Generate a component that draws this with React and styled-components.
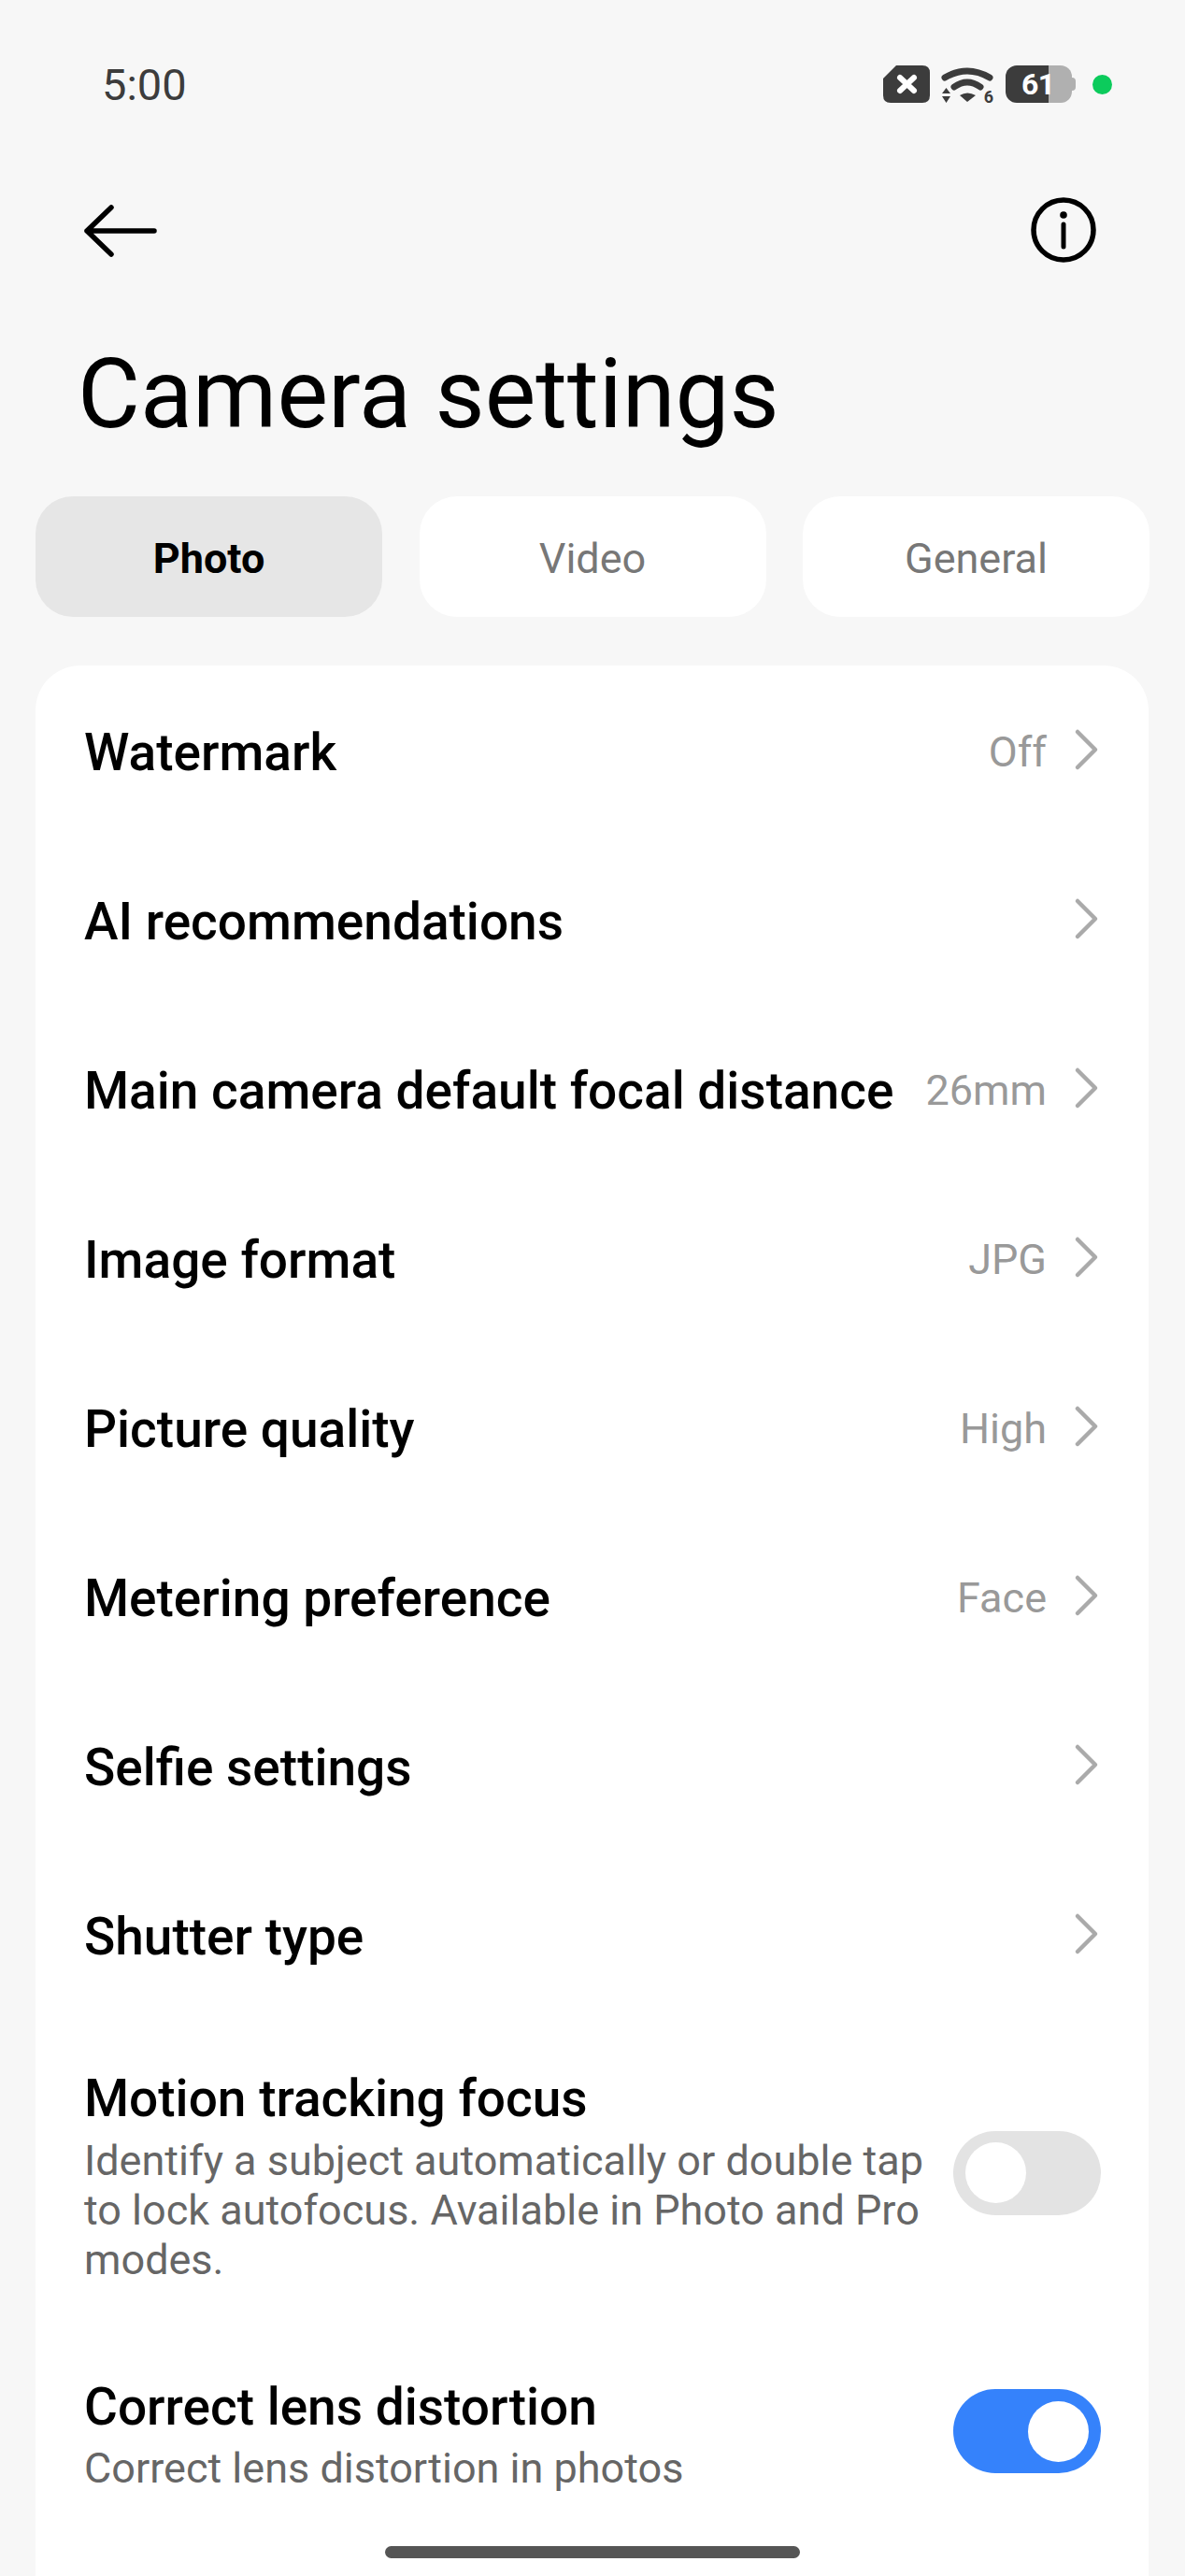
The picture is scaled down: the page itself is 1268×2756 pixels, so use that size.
import React from 'react';
import styled, { createGlobalStyle } from 'styled-components';

const Global = createGlobalStyle`
  html, body { margin: 0; padding: 0; background: #f7f7f7; }
  body { font-family: Roboto, "Noto Sans", sans-serif; }
`;

const Page = styled.div`
  width: 1268px; height: 2756px; overflow: hidden; position: relative; background: #f7f7f7; color: #000;
  display: flex; flex-direction: column;
`;
const StatusBar = styled.div`
  height: 56px; margin-top: 62px; padding: 0 78px 0 110px; display: flex; justify-content: space-between; align-items: center;
`;
const Time = styled.div`font-size: 47px; line-height: 56px; color: #3c3c3c; margin: 2px 0 0 -1px;`;
const StatusIcons = styled.div`display: flex; align-items: center;`;
const SimIcon = styled.svg`width: 50px; height: 40px; display: block;`;
const Wifi = styled.div`position: relative; width: 56px; height: 40px; margin-left: 12px;`;
const WifiIcon = styled.svg`width: 56px; height: 40px; display: block;`;
const WifiBadge = styled.span`
  position: absolute; right: 0; bottom: -1px; font-size: 18px; line-height: 14px; font-weight: 700; color: #3c3c3c;
`;
const Battery = styled.div`
  position: relative; width: 75px; height: 40px; margin-left: 13px;
  display: flex;
`;
const BatteryFill = styled.div`width: 46px; background: #3c3c3c; border-radius: 12px 0 0 12px;`;
const BatteryRest = styled.div`width: 25px; background: #b0b0b0; border-radius: 0 12px 12px 0;`;
const BatteryNub = styled.div`width: 4px; height: 14px; margin-top: 13px; background: #b0b0b0; border-radius: 0 4px 4px 0;`;
const BatteryText = styled.div`
  position: absolute; left: 17px; top: 0; line-height: 40px; font-size: 32px; font-weight: 700; color: #fff; letter-spacing: -0.5px;
`;
const Dot = styled.div`width: 21px; height: 21px; border-radius: 50%; background: #0ccb5c; margin-left: 18px;`;
const Nav = styled.div`
  display: flex; justify-content: space-between; align-items: center; padding: 0 94px 0 90px; margin-top: 91px; height: 72px;
`;
const BackIcon = styled.svg`width: 80px; height: 60px; display: block;`;
const InfoIcon = styled.svg`width: 72px; height: 72px; display: block; margin-top: 1px;`;
const Title = styled.h1`
  margin: 79px 0 0 83px; font-size: 103px; line-height: 124px; font-weight: 400;
`;
const Tabs = styled.div`display: grid; grid-template-columns: repeat(3, 371px); gap: 39.5px; padding: 0 38px; margin-top: 47px;`;
const Tab = styled.div`
  height: 129px; box-sizing: border-box; padding-top: 3px; border-radius: 40px; display: flex; align-items: center; justify-content: center; font-size: 45px;
  background: ${p => p.$active ? '#e6e6e6' : '#fff'}; color: ${p => p.$active ? '#000' : '#777'}; font-weight: ${p => p.$active ? 700 : 400};
`;
const Card = styled.div`
  margin: 52px 39px 0 38px; flex: 1; background: #fff; border-radius: 48px 48px 0 0; padding: 0 51px 0 52px;
`;
const Row = styled.div`display: flex; align-items: center; height: 181px;`;
const Label = styled.div`flex: 1; font-size: 55px; line-height: 64px; color: #000; font-weight: 500; white-space: nowrap;`;
const RowLabel = styled(Label)`padding-top: 4px;`;
const Value = styled.div`color: #999; font-size: 45px; margin-right: 28px; padding-top: 3px;`;
const ChevronIcon = styled.svg`width: 30px; height: 50px; display: block; margin: -2px 0 0 0;`;
const ToggleRow = styled.div`
  display: flex; align-items: center; padding: ${p => p.$first ? '53px 0 49px' : '50px 0 49px'};
`;
const Col = styled.div`flex: 1; padding-right: 24px;`;
const Sub = styled.div`font-size: 45px; line-height: 53px; color: #666; margin-top: 7.5px;`;
const Toggle = styled.div`
  width: 158px; height: 90px; border-radius: 45px; background: ${p => p.$on ? '#3582fb' : '#e3e3e3'}; display: flex; align-items: center; padding: 0 13px; box-sizing: border-box;
  justify-content: ${p => p.$on ? 'flex-end' : 'flex-start'}; flex-shrink: 0; margin-top: -7px;
`;
const Knob = styled.div`width: 65px; height: 65px; border-radius: 50%; background: #fff;`;
const Home = styled.div`position: absolute; left: 412px; bottom: 19px; width: 444px; height: 13px; border-radius: 7px; background: #555;`;

const Chevron = () => (
  <ChevronIcon viewBox="0 0 30 50"><path d="M5 6 L24 25 L5 44" fill="none" stroke="#aaa" strokeWidth="4.5" strokeLinecap="round" strokeLinejoin="round"/></ChevronIcon>
);

const items = [['Watermark','Off'],['AI recommendations'],['Main camera default focal distance','26mm'],['Image format','JPG'],['Picture quality','High'],['Metering preference','Face'],['Selfie settings'],['Shutter type']];

export default function App() {
  return <Page><Global/>
    <StatusBar>
      <Time>5:00</Time>
      <StatusIcons>
        <SimIcon viewBox="0 0 50 40">
          <path d="M14 0 H42 Q50 0 50 8 V32 Q50 40 42 40 H8 Q0 40 0 32 V14 Z" fill="#3c3c3c"/>
          <path d="M18 13 L33 27 M33 13 L18 27" stroke="#fff" strokeWidth="6" strokeLinecap="round"/>
        </SimIcon>
        <Wifi>
          <WifiIcon viewBox="0 0 56 40">
            <path d="M4 13 Q28 -1 52 13" fill="none" stroke="#3c3c3c" strokeWidth="7" strokeLinecap="round"/>
            <path d="M14 23 Q28 13 42 23" fill="none" stroke="#3c3c3c" strokeWidth="7" strokeLinecap="round"/>
            <path d="M20 32 Q28 27 37 32 L28 39 Z" fill="#3c3c3c"/>
            <path d="M1 30 H10 L5.5 24 Z M1 33 H10 L5.5 40 Z" fill="#3c3c3c"/>
          </WifiIcon>
          <WifiBadge>6</WifiBadge>
        </Wifi>
        <Battery>
          <BatteryFill/><BatteryRest/><BatteryNub/>
          <BatteryText>61</BatteryText>
        </Battery>
        <Dot/>
      </StatusIcons>
    </StatusBar>
    <Nav>
      <BackIcon viewBox="0 0 80 60">
        <path d="M3 32 H75 M29 7 L3 32 L29 57" fill="none" stroke="#000" strokeWidth="5.5" strokeLinecap="round" strokeLinejoin="round"/>
      </BackIcon>
      <InfoIcon viewBox="0 0 72 72">
        <circle cx="36" cy="36" r="32" fill="none" stroke="#000" strokeWidth="5.5"/>
        <circle cx="36" cy="20" r="3.8" fill="#000"/>
        <path d="M36 30 V54" stroke="#000" strokeWidth="5" strokeLinecap="round"/>
      </InfoIcon>
    </Nav>
    <Title>Camera settings</Title>
    <Tabs><Tab $active>Photo</Tab><Tab>Video</Tab><Tab>General</Tab></Tabs>
    <Card>
      {items.map(([l,v]) => <Row key={l}><RowLabel>{l}</RowLabel>{v && <Value>{v}</Value>}<Chevron/></Row>)}
      <ToggleRow $first><Col><Label>Motion tracking focus</Label><Sub>Identify a subject automatically or double tap to lock autofocus. Available in Photo and Pro modes.</Sub></Col><Toggle><Knob/></Toggle></ToggleRow>
      <ToggleRow><Col><Label>Correct lens distortion</Label><Sub>Correct lens distortion in photos</Sub></Col><Toggle $on><Knob/></Toggle></ToggleRow>
    </Card>
    <Home/>
  </Page>;
}
